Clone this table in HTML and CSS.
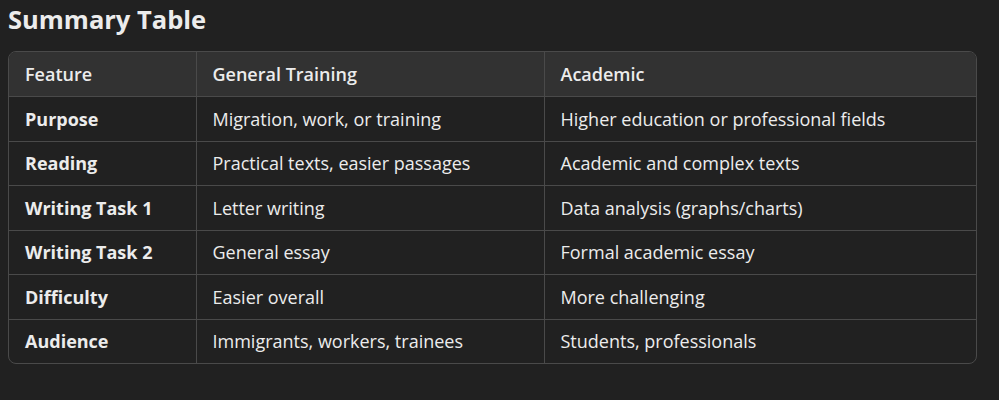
FILE: index.html
```html
<!DOCTYPE html>
<html>
<head>
<meta charset="utf-8">
<link rel="stylesheet" href="styles.css">
</head>
<body>
<h2 class="title">Summary Table</h2>
<div class="table-wrap">
<table class="summary">
<colgroup><col class="c1"><col class="c2"><col class="c3"></colgroup>
<thead>
<tr><th>Feature</th><th>General Training</th><th>Academic</th></tr>
</thead>
<tbody>
<tr><td class="key">Purpose</td><td>Migration, work, or training</td><td>Higher education or professional fields</td></tr>
<tr><td class="key">Reading</td><td>Practical texts, easier passages</td><td>Academic and complex texts</td></tr>
<tr><td class="key">Writing Task 1</td><td>Letter writing</td><td>Data analysis (graphs/charts)</td></tr>
<tr><td class="key">Writing Task 2</td><td>General essay</td><td>Formal academic essay</td></tr>
<tr><td class="key">Difficulty</td><td>Easier overall</td><td>More challenging</td></tr>
<tr><td class="key">Audience</td><td>Immigrants, workers, trainees</td><td>Students, professionals</td></tr>
</tbody>
</table>
</div>
</body>
</html>
```
FILE: styles.css
```css
html, body {
  margin: 0;
  padding: 0;
  background: #212121;
}
body {
  padding: 0 8px;
  font-family: "Open Sans", "Noto Sans", "Liberation Sans", sans-serif;
  color: #ececec;
}
.title {
  margin: 0;
  padding-top: 2px;
  font-size: 25.5px;
  line-height: 34px;
  font-weight: 700;
  height: 49px;
}
.table-wrap {
  width: 967px;
  border: 1px solid #4a4a4a;
  border-radius: 8px;
  overflow: hidden;
}
.summary {
  width: 100%;
  border-collapse: collapse;
  table-layout: fixed;
  font-size: 18px;
}
.c1 { width: 187px; }
.c2 { width: 348px; }
.summary th, .summary td {
  text-align: left;
  padding: 0 16px;
  height: 43.5px;
  border-left: 1px solid #4a4a4a;
  border-top: 1px solid #4a4a4a;
  white-space: nowrap;
}
.summary th:first-child, .summary td:first-child { border-left: none; }
.summary thead th {
  border-top: none;
  background: #323232;
  font-weight: 600;
  height: 44px;
}
.summary td.key { font-weight: 700; }
```
